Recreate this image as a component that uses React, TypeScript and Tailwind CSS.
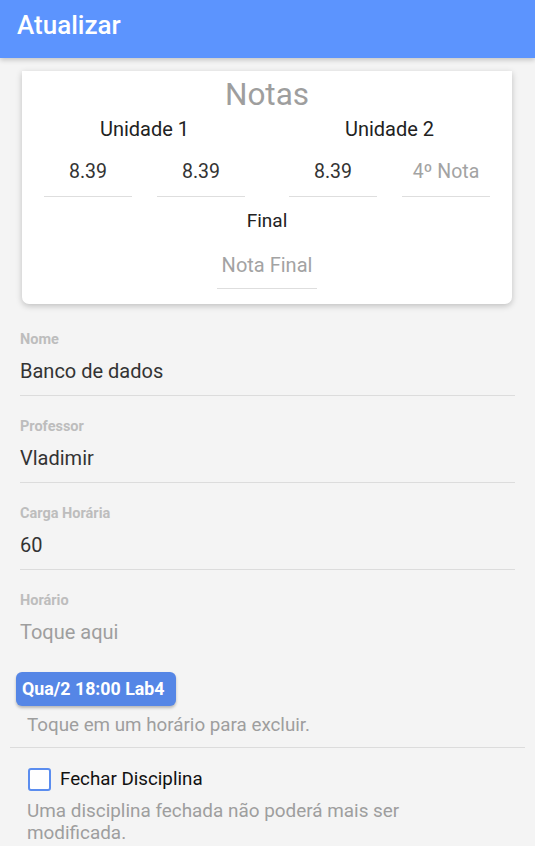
import React from "react";

const font = { fontFamily: "Roboto, 'Noto Sans', sans-serif" };

function GradeInput({ value, placeholder }: { value?: string; placeholder?: string }) {
  return (
    <div className="w-[88px] border-b border-[#dedede] pt-[19px] pb-[12px] text-center text-[19.5px] leading-[24px]">
      {value ? (
        <span className="text-[#333]">{value}</span>
      ) : (
        <span className="text-[#a3a3a3]">{placeholder}</span>
      )}
    </div>
  );
}

function Unit({ title, a, b, bPlaceholder }: { title: string; a: string; b?: string; bPlaceholder?: string }) {
  return (
    <div className="flex flex-col">
      <div className="text-center text-[20px] leading-[24px] text-[#222]">{title}</div>
      <div className="flex justify-between">
        <GradeInput value={a} />
        <GradeInput value={b} placeholder={bPlaceholder} />
      </div>
    </div>
  );
}

function Field({ label, value, placeholder, underline = true }: { label: string; value?: string; placeholder?: string; underline?: boolean }) {
  return (
    <div className={`mx-[20px] flex flex-col pb-[12px] ${underline ? "border-b border-[#dcdcdc]" : ""}`}>
      <div className="text-[14.5px] font-bold leading-[16px] text-[#bdbdbd]">{label}</div>
      <div className={`mt-[11px] text-[20px] leading-[24px] ${value ? "text-[#333]" : "text-[#9e9e9e]"}`}>
        {value ?? placeholder}
      </div>
    </div>
  );
}

export default function App() {
  return (
    <div className="min-h-[846px] w-[535px] overflow-hidden bg-[#f4f4f4]" style={font}>
      <header className="relative z-10 flex h-[58px] items-center bg-[#5c94fe] px-[17px] pb-[8px] shadow-[0_2px_5px_rgba(0,0,0,0.2)]">
        <h1 className="text-[26px] font-medium leading-[30px] text-white">Atualizar</h1>
      </header>

      <section className="mx-[22px] mt-[13px] w-[490px] rounded-b-[7px] bg-white px-[22px] pt-[6px] pb-[15px] shadow-[0_2px_6px_rgba(0,0,0,0.22)]">
        <div className="text-center text-[31.5px] leading-[36px] text-[#9e9e9e]">Notas</div>
        <div className="mt-[4px] grid grid-cols-2 gap-x-[44px]">
          <Unit title="Unidade 1" a="8.39" b="8.39" />
          <Unit title="Unidade 2" a="8.39" bPlaceholder="4º Nota" />
        </div>
        <div className="mt-[12px] text-center text-[19px] leading-[24px] text-[#222]">Final</div>
        <div className="mx-auto w-[100px] border-b border-[#dedede] pt-[20px] pb-[11px] text-center text-[20px] leading-[24px] text-[#a3a3a3]">
          Nota Final
        </div>
      </section>

      <div className="mt-[28px] flex flex-col gap-[23px]">
        <Field label="Nome" value="Banco de dados" />
        <Field label="Professor" value="Vladimir" />
        <Field label="Carga Horária" value="60" />
        <Field label="Horário" placeholder="Toque aqui" underline={false} />
      </div>

      <div className="ml-[16px] mt-[16px] flex">
        <button className="h-[34px] rounded-[6px] bg-[#5586e6] pl-[6px] pr-[11px] text-[17.8px] font-bold text-white shadow-[0_2px_3px_rgba(0,0,0,0.25)]">
          Qua/2 18:00 Lab4
        </button>
      </div>
      <p className="ml-[27px] mt-[7px] text-[18.8px] leading-[24px] text-[#9e9e9e]">Toque em um horário para excluir.</p>

      <div className="mx-[10px] mt-[10px] border-t border-[#dcdcdc]" />

      <label className="ml-[28px] mt-[19px] flex items-center">
        <span className="h-[23px] w-[23px] rounded-[3px] border-2 border-[#5b8def] bg-white" />
        <span className="ml-[9px] text-[18.75px] leading-[24px] text-[#111]">Fechar Disciplina</span>
      </label>
      <p className="ml-[27px] mt-[9px] max-w-[420px] text-[18.9px] leading-[22px] text-[#9e9e9e]">
        Uma disciplina fechada não poderá mais ser modificada.
      </p>
    </div>
  );
}
